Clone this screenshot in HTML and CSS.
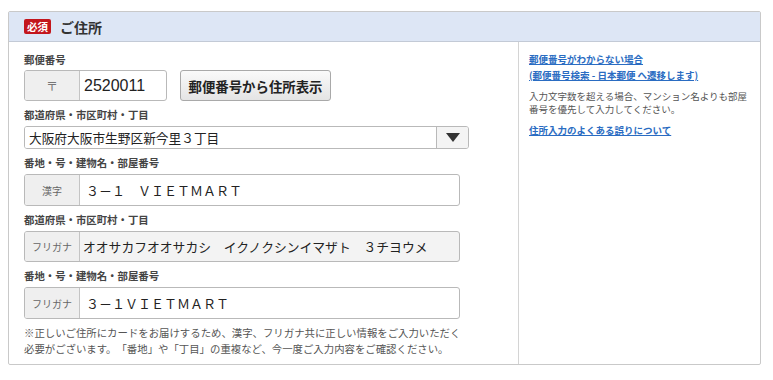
FILE: index.html
```html
<!DOCTYPE html>
<html lang="ja">
<head>
    <meta charset="UTF-8">
    <meta name="viewport" content="width=device-width, initial-scale=1.0">
    <title>ご住所</title>
    <link rel="stylesheet" href="styles.css">
</head>
<body>
    <section class="box">
        <header class="box_header">
            <span class="hissu">必須</span>
            <h2 class="box_title">ご住所</h2>
        </header>

        <div class="box_body">
            <div class="form_col">
                <div class="campo campo-first">
                    <label class="campo_label">郵便番号</label>
                    <div class="postal_row">
                        <div class="grupo grupo-postal">
                            <span class="prefixo prefixo-postal">〒</span>
                            <input class="valor valor-postal" type="text" value="2520011">
                        </div>
                        <button class="btn_busca">郵便番号から住所表示</button>
                    </div>
                </div>

                <div class="campo">
                    <label class="campo_label">都道府県・市区町村・丁目</label>
                    <div class="seletor">
                        <select class="seletor_select">
                            <option>大阪府大阪市生野区新今里３丁目</option>
                        </select>
                        <span class="seletor_seta"></span>
                    </div>
                </div>

                <div class="campo">
                    <label class="campo_label">番地・号・建物名・部屋番号</label>
                    <div class="grupo">
                        <span class="prefixo">漢字</span>
                        <input class="valor valor-kanji" type="text" value="３－１　ＶＩＥＴＭＡＲＴ">
                    </div>
                </div>

                <div class="campo">
                    <label class="campo_label">都道府県・市区町村・丁目</label>
                    <div class="grupo grupo-readonly">
                        <span class="prefixo">フリガナ</span>
                        <input class="valor valor-kana" type="text" readonly value="オオサカフオオサカシ　イクノクシンイマザト　３チヨウメ">
                    </div>
                </div>

                <div class="campo">
                    <label class="campo_label">番地・号・建物名・部屋番号</label>
                    <div class="grupo">
                        <span class="prefixo">フリガナ</span>
                        <input class="valor valor-kanji" type="text" value="３－１ＶＩＥＴＭＡＲＴ">
                    </div>
                </div>

                <p class="nota">※正しいご住所にカードをお届けするため、漢字、フリガナ共に正しい情報をご入力いただく<br>必要がございます。「番地」や「丁目」の重複など、今一度ご入力内容をご確認ください。</p>
            </div>

            <aside class="info_col">
                <a class="info_link" href="#">郵便番号がわからない場合</a><br>
                <a class="info_link" href="#">(郵便番号検索 - 日本郵便 へ遷移します)</a>
                <p class="info_texto">入力文字数を超える場合、マンション名よりも部屋<br>番号を優先して入力してください。</p>
                <a class="info_link" href="#">住所入力のよくある誤りについて</a>
            </aside>
        </div>
    </section>
</body>
</html>
```

FILE: styles.css
```css
body{
    font-family: "Noto Sans CJK JP", "Liberation Sans", sans-serif;
    margin: 0;
    padding: 11px 12px 0 8px;
    background-color: #ffffff;
    color: #333;
    text-spacing-trim: space-all;
}

.box{
    border: 1px solid #c9c9c9;
    border-radius: 2px;
    height: 354px;
    box-sizing: border-box;
    display: flex;
    flex-direction: column;
}

.box_header{
    background-color: #dde6f5;
    border-bottom: 1px solid #c3cad6;
    height: 30px;
    box-sizing: border-box;
    display: flex;
    align-items: center;
    padding-left: 15px;
}

.hissu{
    background-color: #c3161c;
    color: white;
    font-size: 10.5px;
    font-weight: bold;
    line-height: 15px;
    padding: 0 3px;
    border-radius: 2px;
}

.box_title{
    margin: 0 0 0 9px;
    font-size: 14px;
    font-weight: 600;
    color: #333;
}

.box_body{
    flex: 1;
    display: flex;
}

.form_col{
    width: 510px;
    box-sizing: border-box;
    padding: 0 0 0 15px;
    border-right: 1px solid #d4d4d4;
}

.campo{
    margin-top: 7px;
}

.campo-first{
    margin-top: 11px;
}

.campo_label{
    display: block;
    font-size: 10.4px;
    font-weight: bold;
    line-height: 14px;
    color: #444;
    margin-bottom: 4px;
}

.campo-first .campo_label{
    margin-bottom: 3px;
}

.postal_row{
    display: flex;
    align-items: center;
    gap: 13px;
}

.grupo{
    display: flex;
    width: 436px;
    height: 32px;
    border: 1px solid #b9b9b9;
    border-radius: 3px;
    box-sizing: border-box;
    background-color: white;
    overflow: hidden;
}

.grupo-postal{
    width: 143px;
    height: 31px;
}

.grupo-readonly{
    height: 31px;
    background-color: #f3f3f3;
}

.prefixo{
    width: 54px;
    flex: none;
    background-color: #efefef;
    border-right: 1px solid #c4c4c4;
    display: flex;
    align-items: center;
    justify-content: center;
    font-size: 10px;
    color: #666;
}

.prefixo-postal{
    font-size: 12px;
    color: #777;
}

.valor{
    flex: 1;
    min-width: 0;
    border: none;
    background: transparent;
    font-family: "Noto Sans CJK JP", sans-serif;
    font-size: 13px;
    color: #222;
    padding: 0 0 0 5px;
    outline: none;
}

.valor-postal{
    font-family: "Liberation Sans", Arial, sans-serif;
    font-size: 16px;
    padding-left: 4px;
}

.valor-kanji{
    padding-left: 6px;
}

.valor-kana{
    padding-left: 3px;
    font-size: 12.8px;
}

.btn_busca{
    width: 151px;
    height: 31px;
    border: 1px solid #a9a9a9;
    border-radius: 3px;
    background: linear-gradient(#fafafa, #e4e4e4);
    font-family: "Noto Sans CJK JP", sans-serif;
    font-size: 13.4px;
    font-weight: bold;
    color: #222;
    padding: 0;
    cursor: pointer;
}

.seletor{
    display: flex;
    width: 445px;
    height: 23px;
    border: 1px solid #b9b9b9;
    border-radius: 3px;
    box-sizing: border-box;
    overflow: hidden;
}

.seletor_select{
    flex: 1;
    border: none;
    appearance: none;
    background: white;
    font-family: "Noto Sans CJK JP", sans-serif;
    font-size: 12.7px;
    color: #222;
    padding: 0 0 0 4px;
    outline: none;
}

.seletor_seta{
    width: 31px;
    flex: none;
    border-left: 1px solid #b9b9b9;
    background-color: #f4f4f4;
    display: flex;
    align-items: center;
    justify-content: center;
}

.seletor_seta::after{
    content: "";
    border-left: 7px solid transparent;
    border-right: 7px solid transparent;
    border-top: 9px solid #333;
}

.nota{
    margin: 6px 0 0 0;
    font-size: 10.4px;
    line-height: 16px;
    color: #555;
}

.info_col{
    flex: 1;
    padding: 9px 0 0 10px;
    font-size: 9.5px;
    line-height: 16px;
}

.info_link{
    color: #2a6cc2;
    font-weight: bold;
    text-decoration: underline;
}

.info_texto{
    margin: 7px 0 6px 0;
    color: #555;
    line-height: 13px;
}
```
